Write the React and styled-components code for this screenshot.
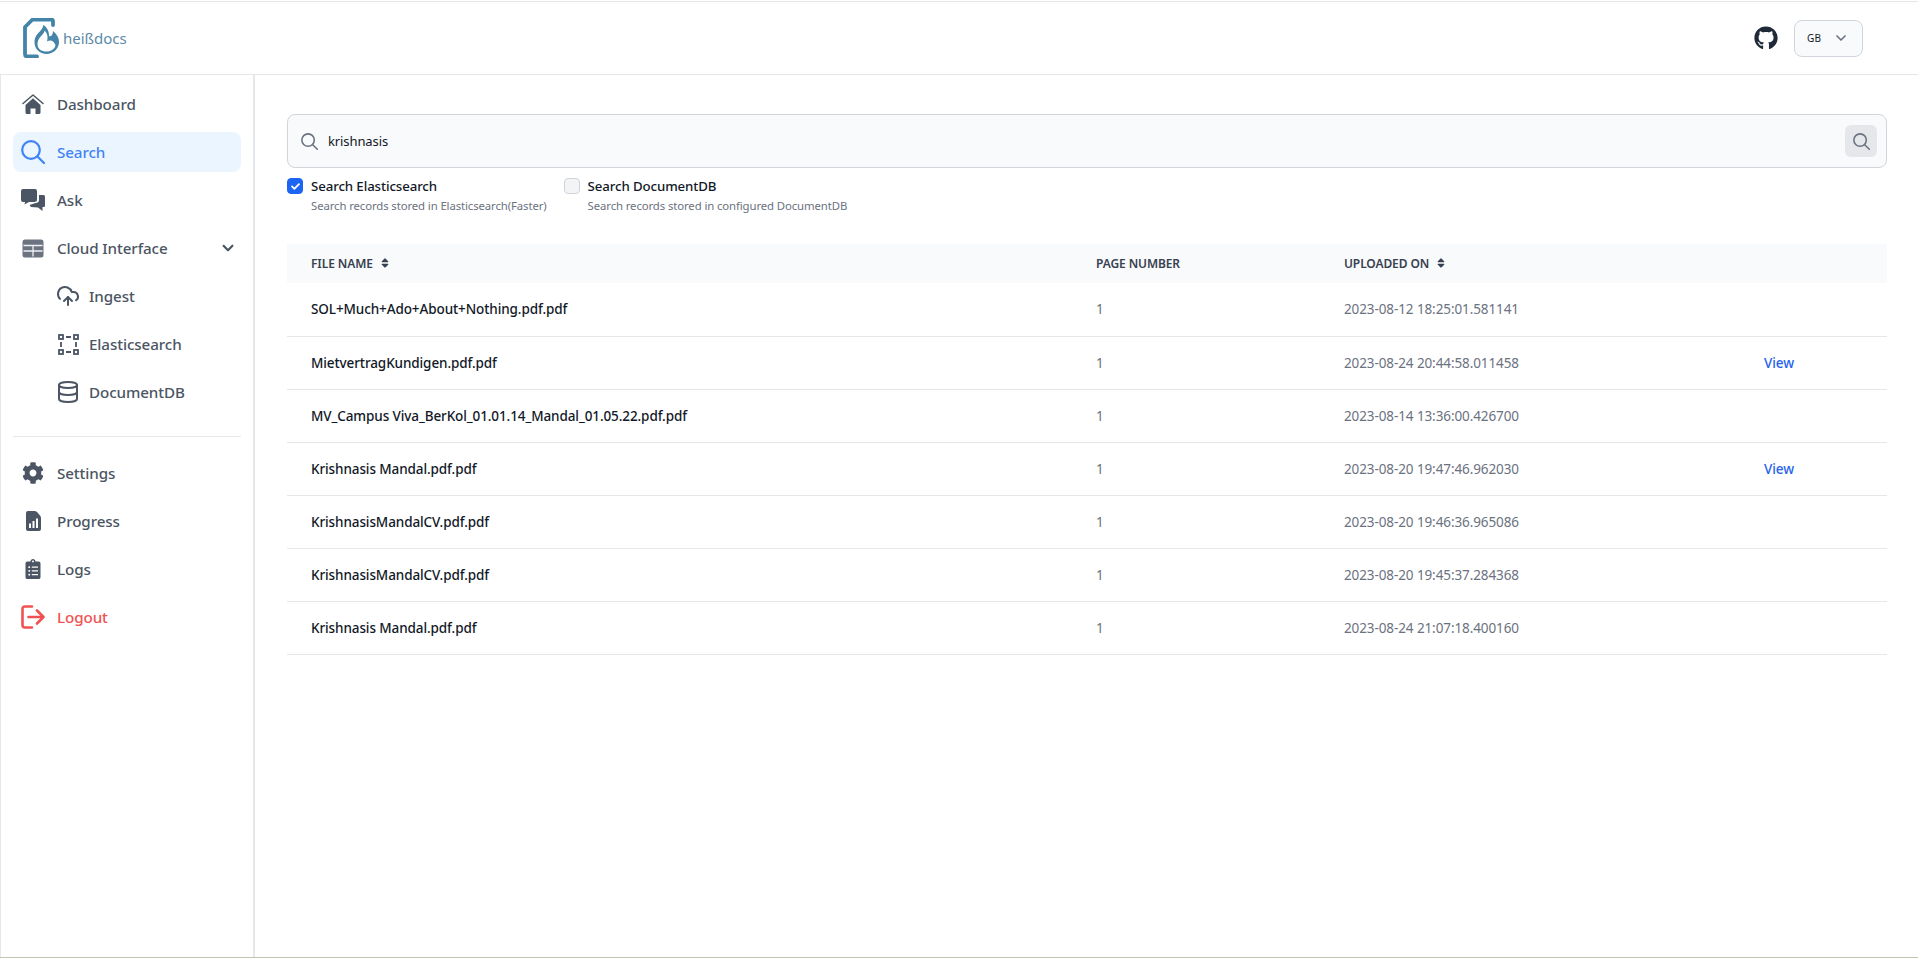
import React from 'react';
import styled, { createGlobalStyle } from 'styled-components';
import { FaCog, FaClipboardList, FaGithub, FaSort, FaCheck } from 'react-icons/fa';
import { FiChevronDown, FiDatabase } from 'react-icons/fi';
import { HiChevronDown } from 'react-icons/hi';
import { CloudUpload } from 'lucide-react';

const Global = createGlobalStyle`
  html, body { margin: 0; padding: 0; background: #fff; }
  body { font-family: "Noto Sans", "Open Sans", sans-serif; color: #111827; }
  * { box-sizing: border-box; }
`;
const Page = styled.div`
  height: 958px; display: flex; flex-direction: column; overflow: hidden;
  border-top: 1px solid transparent; border-bottom: 1px solid #c4c4b4;
`;
const TopBar = styled.header`
  height: 74px; flex: none; display: flex; align-items: center; justify-content: space-between;
  border-top: 1px solid #e5e7eb; border-bottom: 1px solid #e5e7eb; padding: 0 55px 0 22px;
`;
const Brand = styled.div`display: flex; align-items: center; gap: 1px;`;
const BrandName = styled.span`font-size: 15px; color: #5b8aa8;`;
const TopActions = styled.div`display: flex; align-items: center; gap: 16px;`;
const GithubLink = styled.a`display: flex; color: #1f2937; font-size: 24px;`;
const LangSelect = styled.div`
  width: 69px; height: 37px; border: 1px solid #d1d5db; border-radius: 8px; background: #f9fafb;
  display: flex; align-items: center; justify-content: space-between; padding: 0 12px;
  font-size: 10px; color: #111827; letter-spacing: .1px;
  svg { color: #6b7280; font-size: 16px; stroke-width: 2.5; margin-right: 1px; }
`;
const Body = styled.div`flex: 1; display: flex; min-height: 0;`;
const Sidebar = styled.nav`
  width: 255px; flex: none; border-left: 1px solid #e5e7eb; border-right: 2px solid #e5e7eb;
  padding: 9px 12px 0;
`;
const NavItem = styled.a`
  height: 40px; margin-bottom: 8px; display: flex; align-items: center; border-radius: 8px;
  padding-left: ${p => (p.$sub ? 43 : 8)}px; gap: ${p => (p.$sub ? 9 : 12)}px;
  font-size: 15.2px; font-weight: 500; letter-spacing: -.1px;
  color: ${p => (p.$danger ? '#f05252' : p.$active ? '#3f83f8' : '#4b5563')};
  background: ${p => (p.$active ? '#ebf5ff' : 'transparent')};
`;
const NavIcon = styled.span`
  width: 24px; height: 24px; flex: none; display: flex; align-items: center; justify-content: center;
  font-size: ${p => p.$size || 24}px;
`;
const NavCaret = styled.span`margin-left: auto; margin-right: 2px; display: flex; font-size: 22px;`;
const NavRule = styled.hr`border: 0; border-top: 1px solid #e5e7eb; margin: 24px 0 16px;`;
const Main = styled.main`flex: 1; padding: 39px 31px 0 32px; min-width: 0;`;
const SearchBox = styled.div`
  height: 54px; display: flex; align-items: center; border: 1px solid #d1d5db; border-radius: 8px;
  background: #f9fafb; padding: 0 9px 0 13px; gap: 10px;
`;
const SearchGlyph = styled.span`display: flex; color: #6b7280; font-size: 17px;`;
const SearchValue = styled.span`flex: 1; font-size: 13px; color: #111827; letter-spacing: -.1px;`;
const SearchButton = styled.button`
  width: 32px; height: 32px; border: 0; border-radius: 6px; background: #e5e7eb; color: #6b7280;
  display: flex; align-items: center; justify-content: center; font-size: 17px; padding: 0;
`;
const Options = styled.div`display: flex; gap: 17px; margin-top: 9px;`;
const Option = styled.div`display: flex; gap: 8px;`;
const Box = styled.span`
  width: 16px; height: 16px; margin-top: 1px; flex: none; border-radius: 4px; display: flex;
  align-items: center; justify-content: center; color: #fff; font-size: 9px;
  background: ${p => (p.$on ? '#1c64f2' : '#f3f4f6')};
  border: 1px solid ${p => (p.$on ? '#1c64f2' : '#d1d5db')};
`;
const OptionText = styled.div`display: flex; flex-direction: column;`;
const OptionLabel = styled.span`font-size: 13.25px; font-weight: 500; line-height: 18px; color: #111827; letter-spacing: -.1px;`;
const OptionHint = styled.span`font-size: 11.35px; line-height: 18px; margin-top: 2px; color: #6b7280; letter-spacing: -.1px;`;
const Table = styled.table`
  width: 100%; margin-top: 29px; border-collapse: collapse; table-layout: fixed;
`;
const Col = styled.col`width: ${p => p.$w}px;`;
const HeadCell = styled.th`
  height: 39px; padding: 0 24px; background: #f9fafb; text-align: left;
  font-size: 12px; font-weight: 600; text-transform: uppercase; color: #374151; letter-spacing: -.1px;
`;
const SortIcon = styled(FaSort)`font-size: 12px; margin-left: 6px; vertical-align: -1px;`;
const Row = styled.tr`border-bottom: 1px solid #e5e7eb;`;
const NameCell = styled.td`height: 53px; padding: 0 24px; font-size: 13.5px; font-weight: 500; color: #111827; letter-spacing: -.1px;`;
const DataCell = styled.td`padding: 0 24px; font-size: 13.5px; color: #6b7280; letter-spacing: -.1px;`;
const ViewLink = styled.a`color: #2563eb; font-weight: 500;`;

const SearchIcon = () => (
  <svg width="1em" height="1em" viewBox="0 0 24 24" fill="none" stroke="currentColor" strokeWidth="2.2" strokeLinecap="round">
    <circle cx="10" cy="10" r="8.8" />
    <path d="M16.5 16.5 L23 23" />
  </svg>
);
const Logo = () => (
  <svg width="40" height="40" viewBox="0 0 40 40" fill="none">
    <path d="M31 7 V3 Q31 1.5 29 1.5 H10.5 L3 9 V36 Q3 38.5 5.5 38.5 H15" stroke="#4584a9" strokeWidth="3.8" strokeLinecap="round" strokeLinejoin="round" />
    <path d="M21 7 C22 12 13 15 12.5 23 C12 31 18 36 24.5 36 C31 36 37 31 37 24 C37 20 35 16 31 13 C31 17 29 19 27 18 C27 13 25 9 21 7Z" fill="#4584a9" />
    <path d="M22.5 12.5 C23 16 15.5 19 15.5 26 C15.5 31 19.5 33.5 24.5 33.5 C29 33.5 33 31 33.5 27 C32 23 28.5 21 25 23.5 C26 20 26 16 22.5 12.5Z" fill="#fff" />
  </svg>
);
const HomeIcon = () => (
  <svg width="22" height="20" viewBox="0 0 22 20" fill="currentColor">
    <path d="M1 9.5 L11 1 L21 9.5" fill="none" stroke="currentColor" strokeWidth="1.5" strokeLinecap="round" strokeLinejoin="round" />
    <path d="M3.5 11 L11 4.2 L18.5 11 V18.5 Q18.5 20 17 20 H13.5 V14.5 H8.5 V20 H5 Q3.5 20 3.5 18.5Z" />
  </svg>
);
const ChatIcon = () => (
  <svg width="24" height="22" viewBox="0 0 24 22" fill="currentColor">
    <path d="M2 0 H14 Q16 0 16 2 V11 Q16 13 14 13 H8 L3.5 15.5 L4 13 H2 Q0 13 0 11 V2 Q0 0 2 0Z" />
    <path d="M18 6 H22.5 Q24 6 24 7.5 V17 Q24 18 22.5 18 H21.5 V22 L17 18.5 L10 18 Q8 16 8.5 15 L15 14 Q18 13.5 18 11Z" />
    <path d="M6 16.5 L15 13" stroke="#fff" strokeWidth="1.2" fill="none" />
  </svg>
);
const TableIcon = () => (
  <svg width="22" height="19" viewBox="0 0 22 19">
    <rect x="0.5" y="0.5" width="21" height="18" rx="2.5" fill="#6b7280" />
    <path d="M1.5 6.5 H20.5 M1.5 12 H20.5 M11 6.5 V17.5" stroke="#eef0f3" strokeWidth="1.3" fill="none" />
  </svg>
);
const BoundsIcon = () => (
  <svg width="21" height="21" viewBox="0 0 21 21" fill="none" stroke="currentColor" strokeWidth="1.8">
    <rect x="1" y="1" width="4" height="4" />
    <rect x="16" y="1" width="4" height="4" />
    <rect x="1" y="16" width="4" height="4" />
    <rect x="16" y="16" width="4" height="4" />
    <path d="M8 3 H13 M8 18 H13 M3 8 V13 M18 8 V13" />
  </svg>
);
const ReportIcon = () => (
  <svg width="15" height="20" viewBox="0 0 15 20">
    <path d="M2 0 H8.5 Q10 0 11 1 L14 4.5 Q15 5.5 15 7 V18 Q15 20 13 20 H2 Q0 20 0 18 V2 Q0 0 2 0Z" fill="currentColor" />
    <path d="M3 12.5 H5 V17 H3Z M6.5 10 H8.5 V17 H6.5Z M10 7.5 H12 V17 H10Z" fill="#fff" />
  </svg>
);
const LogoutIcon = () => (
  <svg width="24" height="24" viewBox="0 0 24 24" fill="none" stroke="currentColor" strokeWidth="2.6" strokeLinecap="round" strokeLinejoin="round">
    <path d="M11 1.5 H4 Q1.5 1.5 1.5 4 V20 Q1.5 22.5 4 22.5 H11" />
    <path d="M7.5 12 H22.5 M16 5.5 L22.5 12 L16 18.5" />
  </svg>
);

const rows = [
  ['SOL+Much+Ado+About+Nothing.pdf.pdf', '2023-08-12 18:25:01.581141', false],
  ['MietvertragKundigen.pdf.pdf', '2023-08-24 20:44:58.011458', true],
  ['MV_Campus Viva_BerKol_01.01.14_Mandal_01.05.22.pdf.pdf', '2023-08-14 13:36:00.426700', false],
  ['Krishnasis Mandal.pdf.pdf', '2023-08-20 19:47:46.962030', true],
  ['KrishnasisMandalCV.pdf.pdf', '2023-08-20 19:46:36.965086', false],
  ['KrishnasisMandalCV.pdf.pdf', '2023-08-20 19:45:37.284368', false],
  ['Krishnasis Mandal.pdf.pdf', '2023-08-24 21:07:18.400160', false],
];

export default function App() {
  return (
    <Page>
      <Global />
      <TopBar>
        <Brand><Logo /><BrandName>heißdocs</BrandName></Brand>
        <TopActions>
          <GithubLink><FaGithub /></GithubLink>
          <LangSelect>GB<FiChevronDown /></LangSelect>
        </TopActions>
      </TopBar>
      <Body>
        <Sidebar>
          <NavItem><NavIcon><HomeIcon /></NavIcon>Dashboard</NavItem>
          <NavItem $active><NavIcon><SearchIcon /></NavIcon>Search</NavItem>
          <NavItem><NavIcon><ChatIcon /></NavIcon>Ask</NavItem>
          <NavItem><NavIcon><TableIcon /></NavIcon>Cloud Interface<NavCaret><HiChevronDown /></NavCaret></NavItem>
          <NavItem $sub><NavIcon><CloudUpload size={24} /></NavIcon>Ingest</NavItem>
          <NavItem $sub><NavIcon><BoundsIcon /></NavIcon>Elasticsearch</NavItem>
          <NavItem $sub><NavIcon $size={24}><FiDatabase /></NavIcon>DocumentDB</NavItem>
          <NavRule />
          <NavItem><NavIcon $size={22}><FaCog /></NavIcon>Settings</NavItem>
          <NavItem><NavIcon><ReportIcon /></NavIcon>Progress</NavItem>
          <NavItem><NavIcon $size={20}><FaClipboardList /></NavIcon>Logs</NavItem>
          <NavItem $danger><NavIcon><LogoutIcon /></NavIcon>Logout</NavItem>
        </Sidebar>
        <Main>
          <SearchBox>
            <SearchGlyph><SearchIcon /></SearchGlyph>
            <SearchValue>krishnasis</SearchValue>
            <SearchButton><SearchIcon /></SearchButton>
          </SearchBox>
          <Options>
            <Option>
              <Box $on><FaCheck /></Box>
              <OptionText><OptionLabel>Search Elasticsearch</OptionLabel><OptionHint>Search records stored in Elasticsearch(Faster)</OptionHint></OptionText>
            </Option>
            <Option>
              <Box />
              <OptionText><OptionLabel>Search DocumentDB</OptionLabel><OptionHint>Search records stored in configured DocumentDB</OptionHint></OptionText>
            </Option>
          </Options>
          <Table>
            <colgroup><Col $w={785} /><Col $w={248} /><Col $w={420} /><col /></colgroup>
            <thead>
              <tr>
                <HeadCell>File name<SortIcon /></HeadCell>
                <HeadCell>Page number</HeadCell>
                <HeadCell>Uploaded on<SortIcon /></HeadCell>
                <HeadCell />
              </tr>
            </thead>
            <tbody>
              {rows.map(([name, date, view], i) => (
                <Row key={i}>
                  <NameCell>{name}</NameCell>
                  <DataCell>1</DataCell>
                  <DataCell>{date}</DataCell>
                  <DataCell>{view && <ViewLink>View</ViewLink>}</DataCell>
                </Row>
              ))}
            </tbody>
          </Table>
        </Main>
      </Body>
    </Page>
  );
}
